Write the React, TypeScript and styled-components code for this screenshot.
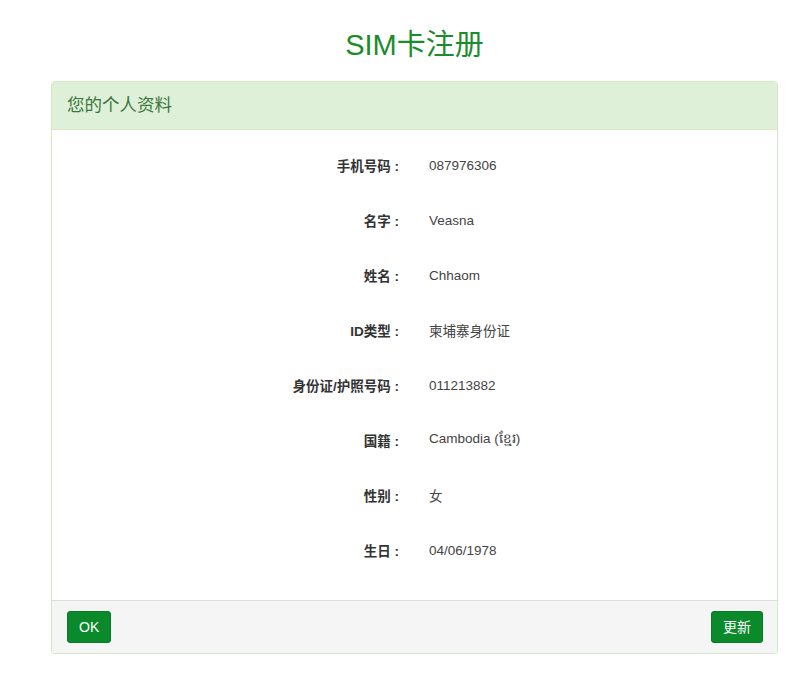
import styled, { createGlobalStyle } from 'styled-components';

const GlobalStyle = createGlobalStyle`
  html, body {
    margin: 0;
    padding: 0;
    background: #fff;
  }
  body {
    font-family: "Liberation Sans", Arial, "Noto Sans CJK SC", sans-serif;
    font-size: 13.5px;
    color: #333;
  }
`;

const Page = styled.div`
  padding: 28px 22px 0 51px;
  width: 727px;
`;

const Title = styled.h1`
  margin: 0 0 19px;
  text-align: center;
  font-size: 29px;
  font-weight: normal;
  line-height: 34px;
  color: #1b8c2c;
`;

const Panel = styled.div`
  border: 1px solid #d6e9c6;
  border-radius: 4px;
  background: #fff;
  box-shadow: 0 1px 2px rgba(0, 0, 0, 0.06);
  overflow: hidden;
`;

const PanelHeading = styled.div`
  background: #dff0d8;
  color: #3c763d;
  font-size: 17.5px;
  line-height: 20px;
  padding: 13px 15px 14px;
  border-bottom: 1px solid #d6e9c6;
`;

const PanelBody = styled.div`
  padding: 15px 15px 15px;
`;

const Row = styled.div`
  display: grid;
  grid-template-columns: 332px 1fr;
  column-gap: 30px;
  height: 40px;
  align-items: center;
  margin-bottom: 15px;
`;

const Label = styled.div`
  text-align: right;
  font-weight: bold;
  color: #333;
`;

const Value = styled.div`
  color: #444;
`;

const PanelFooter = styled.div`
  display: flex;
  justify-content: space-between;
  align-items: center;
  background: #f5f5f5;
  border-top: 1px solid #ddd;
  padding: 10px 14px 10px 15px;
`;

const Button = styled.button`
  font-family: inherit;
  font-size: 14px;
  line-height: 20px;
  padding: 5px 11px;
  background: #0a8a2a;
  color: #fff;
  border: 1px solid #097a25;
  border-radius: 3px;
`;

const rows: [string, string][] = [
  ['手机号码', '087976306'],
  ['名字', 'Veasna'],
  ['姓名', 'Chhaom'],
  ['ID类型', '柬埔寨身份证'],
  ['身份证/护照号码', '011213882'],
  ['国籍', 'Cambodia (ខ្មែរ)'],
  ['性别', '女'],
  ['生日', '04/06/1978'],
];

export default function App() {
  return (
    <>
      <GlobalStyle />
      <Page>
        <Title>SIM卡注册</Title>
        <Panel>
          <PanelHeading>您的个人资料</PanelHeading>
          <PanelBody>
            {rows.map(([label, value]) => (
              <Row key={label}>
                <Label>{label} :</Label>
                <Value>{value}</Value>
              </Row>
            ))}
          </PanelBody>
          <PanelFooter>
            <Button>OK</Button>
            <Button>更新</Button>
          </PanelFooter>
        </Panel>
      </Page>
    </>
  );
}
